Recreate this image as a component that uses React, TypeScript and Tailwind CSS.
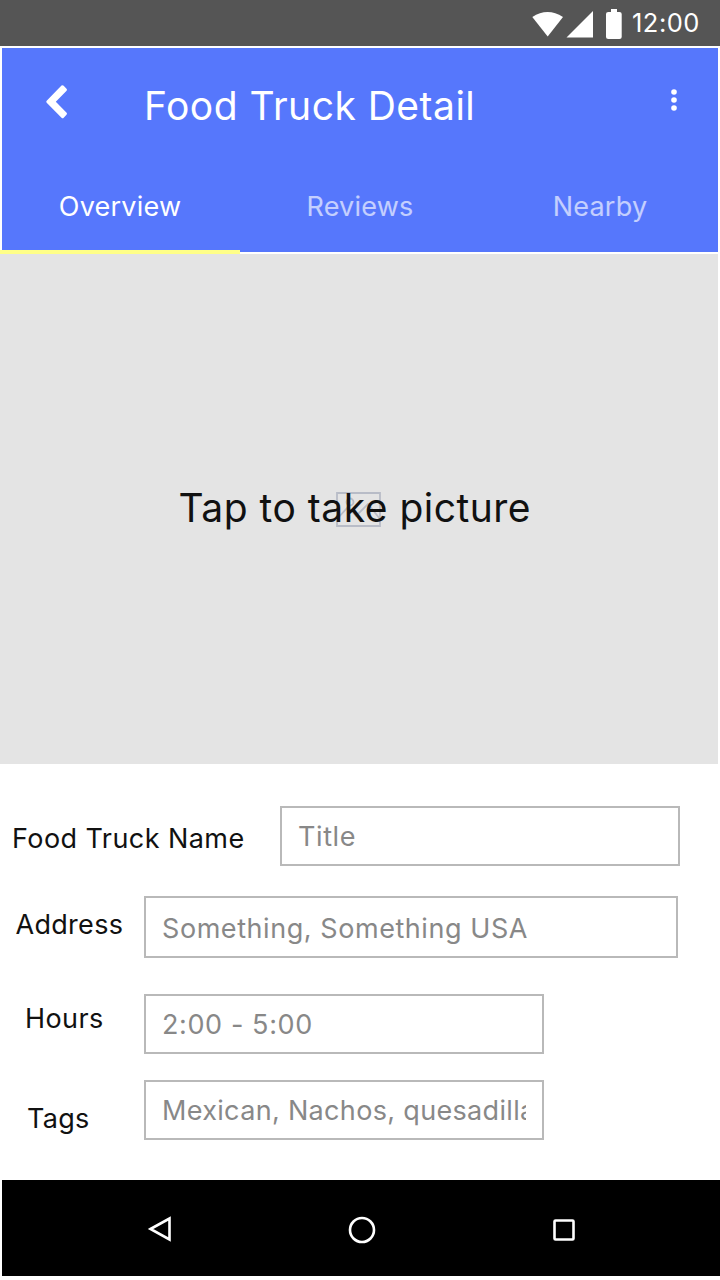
import React from "react";

type FieldProps = { label: string; value: string; row: string; labelBox: string; box: string; text: string };

const fields: FieldProps[] = [
  { label: "Food Truck Name", value: "Title", row: "mt-[42px] h-[60px] pl-[12px]", labelBox: "w-[268px] pt-[12px] tracking-[0.43px]", box: "w-[400px] h-[60px]", text: "pt-[8px] tracking-[0.6px]" },
  { label: "Address", value: "Something, Something USA", row: "mt-[30px] h-[62px] pl-[15.5px]", labelBox: "w-[128.5px] pt-[8px] tracking-[0.3px]", box: "w-[534px] h-[62px]", text: "pt-[10px] tracking-[0.56px]" },
  { label: "Hours", value: "2:00 - 5:00", row: "mt-[36px] h-[60px] pl-[25px]", labelBox: "w-[119px] pt-[4px] tracking-[0.4px]", box: "w-[400px] h-[60px]", text: "pt-[8px] tracking-[0.6px]" },
  { label: "Tags", value: "Mexican, Nachos, quesadillas", row: "mt-[26px] h-[60px] pl-[27px]", labelBox: "w-[117px] pt-[18px] tracking-[0.3px]", box: "w-[400px] h-[60px]", text: "pt-[8px] tracking-[0.33px]" },
];

function Field({ label, value, row, labelBox, box, text }: FieldProps) {
  return (
    <div className={`flex ${row}`}>
      <div className={`shrink-0 whitespace-nowrap text-[27px] leading-[41px] text-[#111] ${labelBox}`}>{label}</div>
      <div className={`shrink-0 border-2 border-[#b9b9b9] bg-white px-4 ${box}`}>
        <div className={`overflow-hidden whitespace-nowrap text-[27px] leading-[41px] text-[#888] ${text}`}>{value}</div>
      </div>
    </div>
  );
}

export default function App() {
  return (
    <div className="flex h-[1280px] w-[720px] flex-col overflow-hidden bg-white font-['Inter',sans-serif]">
      <div className="flex h-[46px] shrink-0 items-start justify-end bg-[#555] pr-[20px]">
        <svg className="h-[46px] w-[100px]" viewBox="0 0 100 46" fill="white">
          <path d="M0.3 17Q15.5 7 31 17L15.7 36.5Z" />
          <path d="M61 11V37.5H34.5Z" />
          <path d="M79 9H85V12H87.5Q89.7 12 89.7 14V37Q89.7 39 87.5 39H76.3Q74 39 74 37V14Q74 12 76.3 12H79Z" />
        </svg>
        <div className="w-[68px] whitespace-nowrap pt-[7px] text-[25.5px] leading-8 tracking-[0.5px] text-white">12:00</div>
      </div>
      <header className="mx-[2px] mt-[2px] flex h-[204px] shrink-0 flex-col bg-[#5677fc] text-white">
        <div className="flex h-[114px] shrink-0 items-start">
          <svg className="ml-[43px] mt-[36px] h-[36px] w-[24px]" viewBox="0 0 24 36" fill="white"><path d="M16.5 1.5Q17.7 .8 18.7 1.8L21.5 4.7Q22.5 5.8 21.6 6.8L10.8 17.8L21.6 28.8Q22.5 29.8 21.5 30.8L18.7 33.7Q17.7 34.7 16.5 33.7L1.7 18.8Q.7 17.8 1.7 16.8Z" /></svg>
          <h1 className="ml-[75px] mt-[34px] whitespace-nowrap text-[39px] font-normal leading-[48px] tracking-[0.48px]">Food Truck Detail</h1>
          <svg className="ml-auto mr-[37px] mt-[40px] h-6 w-[14px]" viewBox="0 0 14 24" fill="white"><circle cx="7" cy="4" r="2.8"/><circle cx="7" cy="12" r="2.8"/><circle cx="7" cy="20" r="2.8"/></svg>
        </div>
        <nav className="-mx-[2px] grid h-[92px] shrink-0 grid-cols-3 text-center text-[27px] leading-[86px] tracking-[0.22px]">
          <div className="h-[92px] border-b-4 border-[#ffff88] pt-[2px]">Overview</div><div className="pt-[2px] text-white/65">Reviews</div><div className="pt-[2px] text-white/65">Nearby</div>
        </nav>
      </header>
      <main className="relative mr-[2px] mt-[2px] h-[510px] shrink-0 bg-[#e4e4e4]">
        <svg className="absolute left-[336px] top-[238px] h-[35px] w-[45px]" viewBox="0 0 45 35" fill="none" stroke="#b8bcc7" strokeWidth="1.8"><path d="M1 1H44V34H1ZM1 27L12 15L20 24L32 12L44 27" /><circle cx="14" cy="10" r="3.5" /></svg>
        <div className="relative whitespace-nowrap pl-[178.5px] pt-[230px] text-[39px] leading-[48px] tracking-[0.5px] text-[#111]">Tap to take picture</div>
      </main>
      <section className="h-[416px] shrink-0">{fields.map((f) => <Field key={f.label} {...f} />)}</section>
      <footer className="ml-[2px] flex h-24 shrink-0 items-center bg-black">
        <svg className="h-24 w-full" viewBox="2 1180 718 96" fill="none" stroke="white" strokeWidth="2.6"><path d="M150.5 1229L169.5 1218.5V1239.5Z"/><circle cx="362" cy="1230" r="12"/><rect x="554.5" y="1220.5" width="19" height="19" rx="1"/></svg>
      </footer>
    </div>
  );
}
